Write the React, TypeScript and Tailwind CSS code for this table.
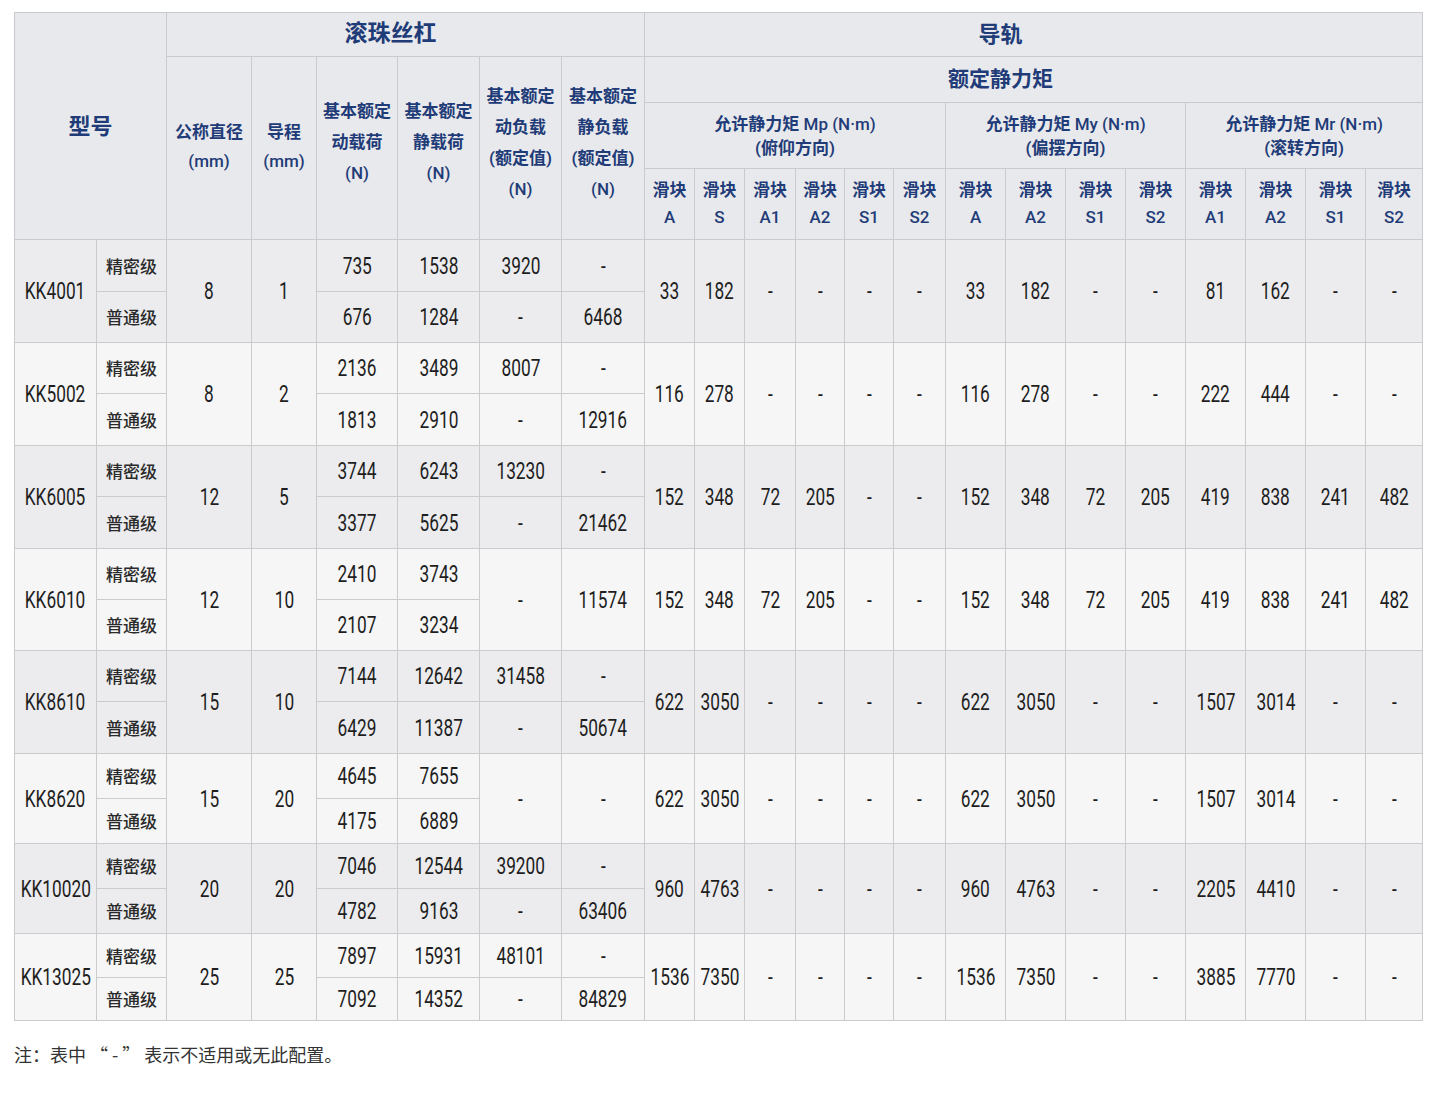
import React from "react";

const numFont = "font-['Roboto','Noto_Sans_CJK_SC',sans-serif]";
const headFont = "font-['Roboto','Noto_Sans_CJK_SC',sans-serif]";

const widths = [82, 70, 85, 65, 81, 82, 82, 83, 50, 50, 51, 49, 49, 52, 60, 60, 60, 60, 60, 60, 60, 57];

type Model = {
  name: string;
  dia: string;
  lead: string;
  precise: string[];
  normal: string[];
  mergedLoad?: string[];
  rail: string[];
  heights: [number, number];
};

const models: Model[] = [
  { name: "KK4001", dia: "8", lead: "1", precise: ["735", "1538", "3920", "-"], normal: ["676", "1284", "-", "6468"], rail: ["33", "182", "-", "-", "-", "-", "33", "182", "-", "-", "81", "162", "-", "-"], heights: [52, 51] },
  { name: "KK5002", dia: "8", lead: "2", precise: ["2136", "3489", "8007", "-"], normal: ["1813", "2910", "-", "12916"], rail: ["116", "278", "-", "-", "-", "-", "116", "278", "-", "-", "222", "444", "-", "-"], heights: [51, 52] },
  { name: "KK6005", dia: "12", lead: "5", precise: ["3744", "6243", "13230", "-"], normal: ["3377", "5625", "-", "21462"], rail: ["152", "348", "72", "205", "-", "-", "152", "348", "72", "205", "419", "838", "241", "482"], heights: [51, 52] },
  { name: "KK6010", dia: "12", lead: "10", precise: ["2410", "3743"], normal: ["2107", "3234"], mergedLoad: ["-", "11574"], rail: ["152", "348", "72", "205", "-", "-", "152", "348", "72", "205", "419", "838", "241", "482"], heights: [51, 51] },
  { name: "KK8610", dia: "15", lead: "10", precise: ["7144", "12642", "31458", "-"], normal: ["6429", "11387", "-", "50674"], rail: ["622", "3050", "-", "-", "-", "-", "622", "3050", "-", "-", "1507", "3014", "-", "-"], heights: [51, 52] },
  { name: "KK8620", dia: "15", lead: "20", precise: ["4645", "7655"], normal: ["4175", "6889"], mergedLoad: ["-", "-"], rail: ["622", "3050", "-", "-", "-", "-", "622", "3050", "-", "-", "1507", "3014", "-", "-"], heights: [45, 45] },
  { name: "KK10020", dia: "20", lead: "20", precise: ["7046", "12544", "39200", "-"], normal: ["4782", "9163", "-", "63406"], rail: ["960", "4763", "-", "-", "-", "-", "960", "4763", "-", "-", "2205", "4410", "-", "-"], heights: [45, 45] },
  { name: "KK13025", dia: "25", lead: "25", precise: ["7897", "15931", "48101", "-"], normal: ["7092", "14352", "-", "84829"], rail: ["1536", "7350", "-", "-", "-", "-", "1536", "7350", "-", "-", "3885", "7770", "-", "-"], heights: [44, 43] },
];

const sliders = ["A", "S", "A1", "A2", "S1", "S2", "A", "A2", "S1", "S2", "A1", "A2", "S1", "S2"];

function Lines({ lines, lh }: { lines: React.ReactNode[]; lh: string }) {
  return (
    <>
      {lines.map((l, i) => (
        <div key={i} className={lh}>
          {l}
        </div>
      ))}
    </>
  );
}

// latin bits of the header are set lighter than the chinese
function Lat({ t }: { t: string }) {
  return <span className="font-medium">{t}</span>;
}

// condensed look for digits: no condensed face installed, so squeeze Roboto
function Num({ v }: { v: string }) {
  return (
    <div className="flex justify-center">
      <span className="shrink-0 scale-x-[0.72] whitespace-nowrap">{v}</span>
    </div>
  );
}

const th = "border border-[#c9cacd] bg-[#e8e9ec] text-[#1f3c78] text-center align-middle p-0";
const td = "border border-[#cbcbcd] text-center align-middle p-0";
const grade = `${td} font-['Noto_Sans_CJK_SC',sans-serif] text-[17px] font-medium text-[#2a2a2a]`;
const small = `${th} ${headFont} text-[17px] font-semibold`;

export default function App() {
  return (
    <div className="min-h-screen bg-white pt-[12px] pl-[14px]">
      <table className={`border-collapse table-fixed w-[1408px] ${numFont}`}>
        <colgroup>
          {widths.map((w, i) => (
            <col key={i} style={{ width: w }} />
          ))}
        </colgroup>
        <thead>
          <tr className="h-[44px]">
            <th rowSpan={4} colSpan={2} className={`${th} ${headFont} text-[22px] font-bold`}>
              型号
            </th>
            <th colSpan={6} className={`${th} ${headFont} text-[23px] font-bold pr-[30px]`}>
              滚珠丝杠
            </th>
            <th colSpan={14} className={`${th} ${headFont} text-[22px] font-bold pr-[66px]`}>
              导轨
            </th>
          </tr>
          <tr className="h-[46px]">
            <th rowSpan={3} className={`${small} pb-[3px]`}>
              <Lines lines={["公称直径", <Lat t="(mm)" />]} lh="leading-[29px]" />
            </th>
            <th rowSpan={3} className={`${small} pb-[3px]`}>
              <Lines lines={["导程", <Lat t="(mm)" />]} lh="leading-[29px]" />
            </th>
            <th rowSpan={3} className={`${small} pb-[12px]`}>
              <Lines lines={["基本额定", "动载荷", <Lat t="(N)" />]} lh="leading-[31px]" />
            </th>
            <th rowSpan={3} className={`${small} pb-[12px]`}>
              <Lines lines={["基本额定", "静载荷", <Lat t="(N)" />]} lh="leading-[31px]" />
            </th>
            <th rowSpan={3} className={`${small} pb-[10px]`}>
              <Lines lines={["基本额定", "动负载", "(额定值)", <Lat t="(N)" />]} lh="leading-[31px]" />
            </th>
            <th rowSpan={3} className={`${small} pb-[10px]`}>
              <Lines lines={["基本额定", "静负载", "(额定值)", <Lat t="(N)" />]} lh="leading-[31px]" />
            </th>
            <th colSpan={14} className={`${th} ${headFont} text-[21px] font-bold pr-[66px]`}>
              额定静力矩
            </th>
          </tr>
          <tr className="h-[66px]">
            <th colSpan={6} className={small}>
              <Lines lines={[<>允许静力矩 <Lat t="Mp (N·m)" /></>, "(俯仰方向)"]} lh="leading-[24px]" />
            </th>
            <th colSpan={4} className={small}>
              <Lines lines={[<>允许静力矩 <Lat t="My (N·m)" /></>, "(偏摆方向)"]} lh="leading-[24px]" />
            </th>
            <th colSpan={4} className={small}>
              <Lines lines={[<>允许静力矩 <Lat t="Mr (N·m)" /></>, "(滚转方向)"]} lh="leading-[24px]" />
            </th>
          </tr>
          <tr className="h-[71px]">
            {sliders.map((s, i) => (
              <th key={i} className={small}>
                <Lines lines={["滑块", <Lat t={s} />]} lh="leading-[27px]" />
              </th>
            ))}
          </tr>
        </thead>
        <tbody className="text-[#1e1e1e] text-[24px]">
          {models.map((m, mi) => {
            const bg = mi % 2 === 0 ? "bg-[#ececee]" : "bg-[#f6f6f6]";
            return (
              <React.Fragment key={m.name}>
                <tr className={bg} style={{ height: m.heights[0] }}>
                  <td rowSpan={2} className={td}><Num v={m.name} /></td>
                  <td className={grade}>精密级</td>
                  <td rowSpan={2} className={td}><Num v={m.dia} /></td>
                  <td rowSpan={2} className={td}><Num v={m.lead} /></td>
                  {m.precise.map((v, i) => (
                    <td key={i} className={td}><Num v={v} /></td>
                  ))}
                  {m.mergedLoad &&
                    m.mergedLoad.map((v, i) => (
                      <td key={"m" + i} rowSpan={2} className={td}><Num v={v} /></td>
                    ))}
                  {m.rail.map((v, i) => (
                    <td key={"r" + i} rowSpan={2} className={td}><Num v={v} /></td>
                  ))}
                </tr>
                <tr className={bg} style={{ height: m.heights[1] }}>
                  <td className={grade}>普通级</td>
                  {m.normal.map((v, i) => (
                    <td key={i} className={td}><Num v={v} /></td>
                  ))}
                </tr>
              </React.Fragment>
            );
          })}
        </tbody>
      </table>
      <p className="mt-[20px] font-['Noto_Sans_CJK_SC',sans-serif] text-[18px] text-[#333] whitespace-pre">
        注：表中 “ - ” 表示不适用或无此配置。
      </p>
    </div>
  );
}
